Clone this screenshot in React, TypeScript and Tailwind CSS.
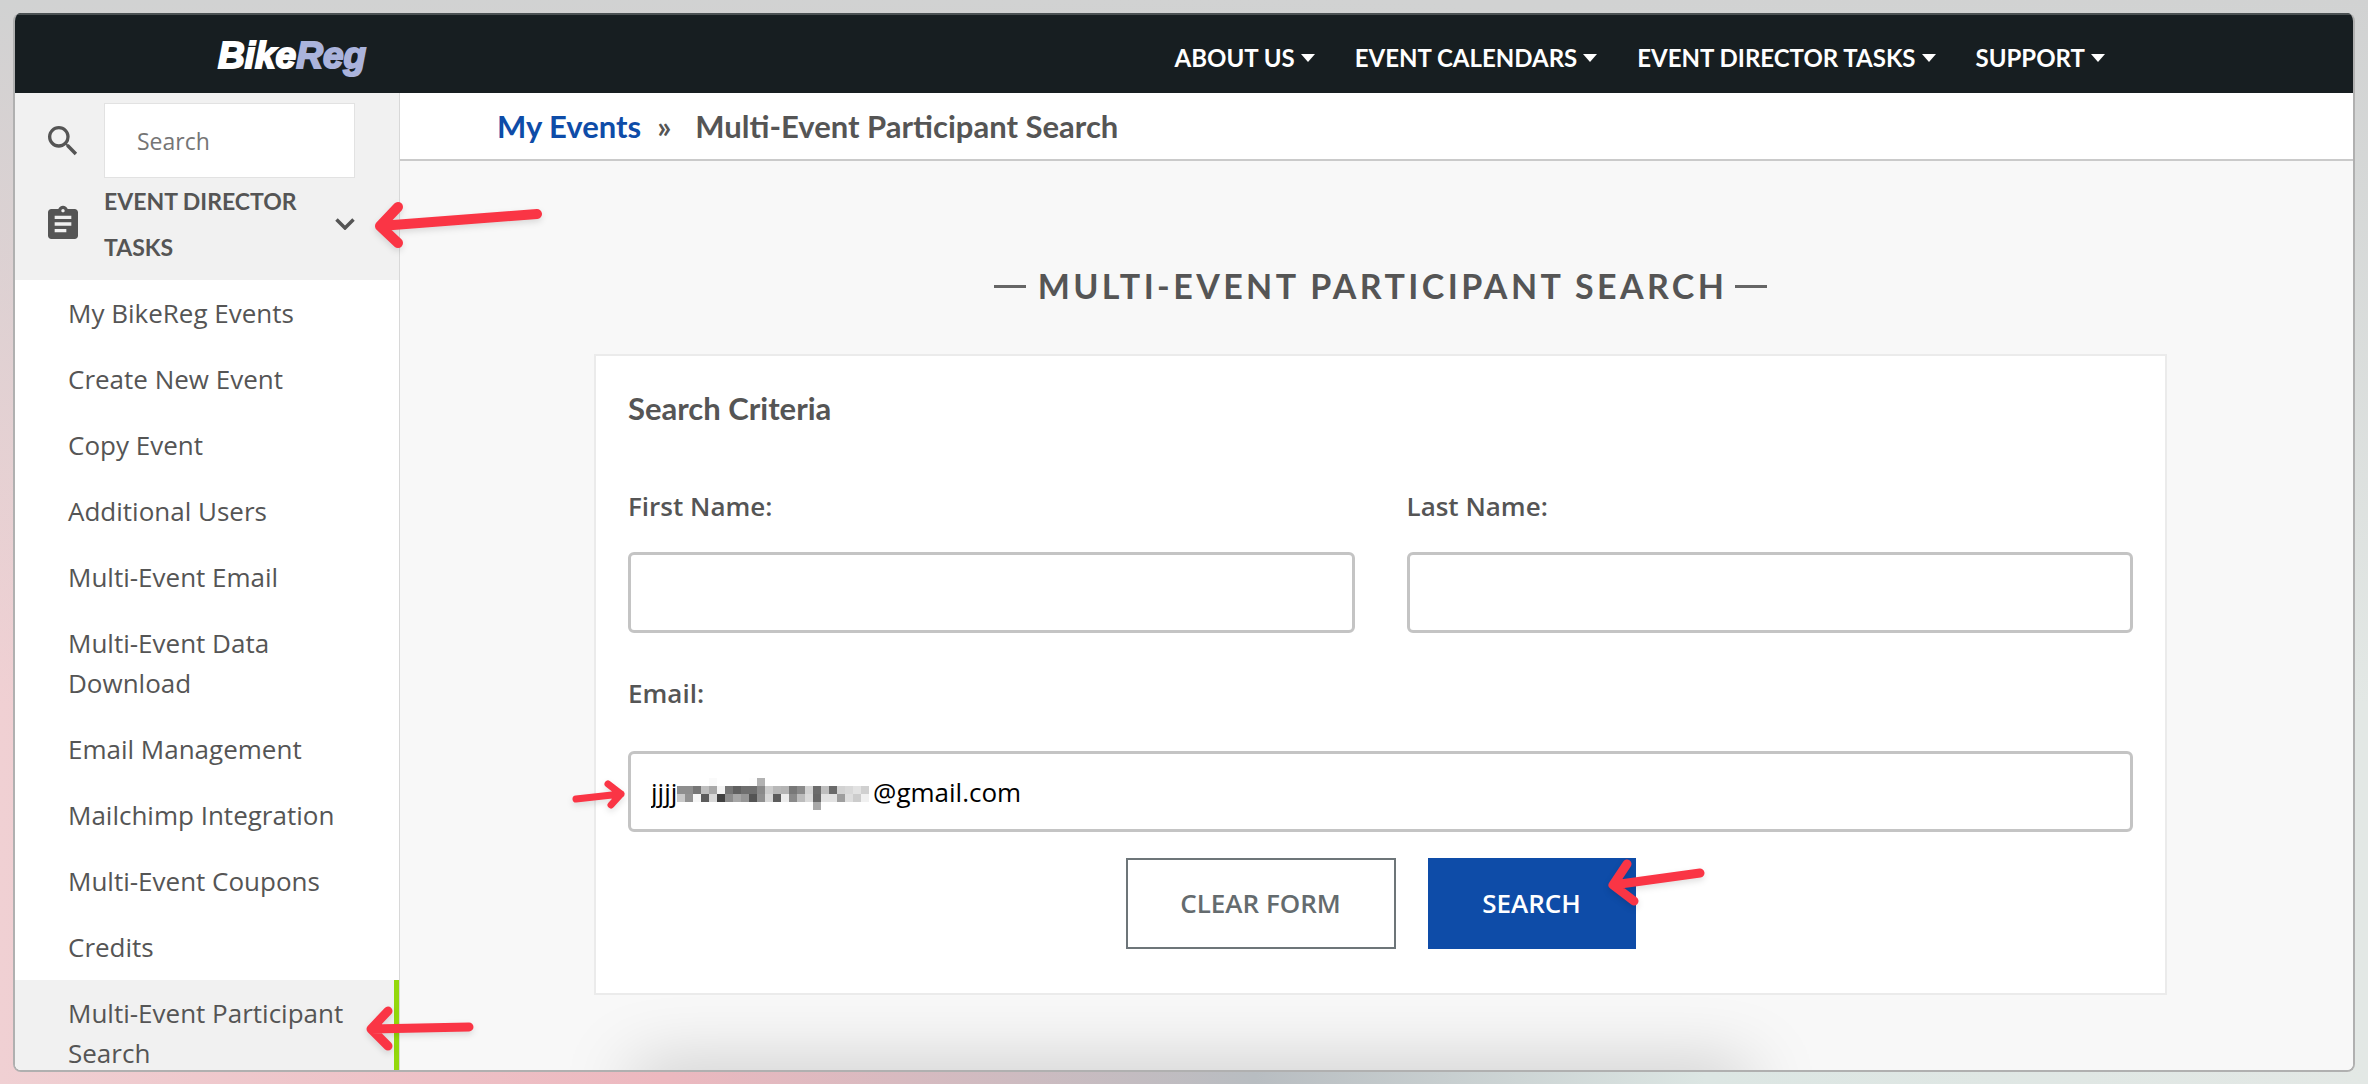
import { useState } from "react";
import { MdAssignment, MdSearch } from "react-icons/md";

const NAV_ITEMS = ["About Us", "Event Calendars", "Event Director Tasks", "Support"];

const MENU_ITEMS = [
  "My BikeReg Events",
  "Create New Event",
  "Copy Event",
  "Additional Users",
  "Multi-Event Email",
  "Multi-Event Data Download",
  "Email Management",
  "Mailchimp Integration",
  "Multi-Event Coupons",
  "Credits",
  "Multi-Event Participant Search",
];

const ACTIVE_ITEM = "Multi-Event Participant Search";

// grey levels of the redacted part of the address, 8px cells
const REDACTED = [
  [255, 255, 255, 255, 250, 255, 255, 255, 255, 253, 178, 255, 255, 255, 255, 255, 255, 255, 255, 255, 255, 255, 255, 255],
  [142, 142, 118, 190, 168, 244, 118, 96, 110, 110, 138, 204, 184, 180, 120, 138, 210, 108, 190, 106, 210, 216, 226, 208],
  [200, 146, 246, 92, 216, 64, 140, 166, 150, 84, 144, 216, 92, 236, 138, 188, 218, 104, 226, 226, 158, 222, 204, 240],
  [255, 255, 255, 255, 255, 255, 255, 255, 255, 255, 255, 255, 255, 255, 255, 255, 255, 168, 255, 255, 255, 255, 255, 255],
];

const FIELD = "h-[81px] w-full rounded-md border-[3px] border-[#c4c4c4] bg-white px-5 text-[26px] text-black outline-none";
const LABEL = "text-[26px] leading-9 font-semibold";

interface ArrowProps {
  className: string;
  viewBox: string;
  d: string;
  strokeWidth: number;
}

function Arrow({ className, viewBox, d, strokeWidth }: ArrowProps) {
  return (
    <svg
      className={`pointer-events-none absolute overflow-visible drop-shadow-md ${className}`}
      viewBox={viewBox}
      fill="none"
      stroke="#fa3545"
      strokeWidth={strokeWidth}
      strokeLinecap="round"
      strokeLinejoin="round"
      aria-hidden="true"
    >
      <path d={d} />
    </svg>
  );
}

function Header() {
  return (
    <header className="flex h-20 shrink-0 items-center justify-between border-t-2 border-[#4b5153] bg-[#171e21] pt-2 pr-[248px] pl-[203px]">
      <a
        href="#"
        className="pb-1 font-['Liberation_Sans',sans-serif] text-[37px] leading-10 font-bold text-white italic [-webkit-text-stroke:2px]"
      >
        Bike<span className="text-[#aab3dc]">Reg</span>
      </a>
      <nav className="flex gap-10 font-['Lato',sans-serif] text-[24px] font-bold text-white">
        {NAV_ITEMS.map((item) => (
          <button key={item} type="button" className="flex items-center gap-1.5 uppercase">
            {item}
            <svg className="h-2 w-3.5" viewBox="0 0 14 8" fill="currentColor" aria-hidden="true">
              <path d="M0 0h14L7 8z" />
            </svg>
          </button>
        ))}
      </nav>
    </header>
  );
}

function Sidebar() {
  return (
    <aside className="relative z-10 w-[385px] shrink-0 border-r border-[#d8d8d8] bg-white">
      <div className="bg-[#f1f1f1] pt-2.5 pb-2.5 pl-7">
        <div className="flex items-center gap-[21px]">
          <MdSearch className="size-10 shrink-0" />
          <input
            type="search"
            aria-label="Search"
            placeholder="Search"
            className="h-[75px] w-[251px] border border-[#e2e2e2] bg-white px-8 text-[23px] outline-none placeholder:text-[#757575]"
          />
        </div>
        <button type="button" className="relative flex w-full items-center gap-[21px] text-left">
          <MdAssignment className="size-10 shrink-0" />
          <span className="w-[220px] font-['Lato',sans-serif] text-[23px] leading-[46px] font-bold uppercase">
            Event Director Tasks
          </span>
          <svg className="-ml-2.5 h-3 w-5" viewBox="0 0 20 12" fill="none" stroke="currentColor" strokeWidth="3.5" aria-hidden="true">
            <path d="M1.5 1.5 10 10l8.500-8.500" />
          </svg>
          <Arrow
            className="top-6 left-[332px] h-[46px] w-[167px]"
            viewBox="0 0 167 46"
            d="M162 12 5 24M23 5 5 24 23 41"
            strokeWidth={10}
          />
        </button>
      </div>
      <ul>
        {MENU_ITEMS.map((item) => (
          <li key={item} className="relative">
            <a
              href="#"
              className={`block border-r-[5px] py-[13px] pr-8 pl-[53px] text-[26px] leading-10 ${
                item === ACTIVE_ITEM ? "border-[#93d80b] bg-[#f1f1f1]" : "border-transparent"
              }`}
            >
              {item}
            </a>
            {item === ACTIVE_ITEM && (
              <Arrow
                className="top-[25px] left-[350px] h-[46px] w-[109px]"
                viewBox="0 0 109 46"
                d="M104 22 6 24M23 6 6 24 23 41"
                strokeWidth={9}
              />
            )}
          </li>
        ))}
      </ul>
    </aside>
  );
}

function SearchForm() {
  const [firstName, setFirstName] = useState("");
  const [lastName, setLastName] = useState("");
  const [email, setEmail] = useState("jjjj                             @gmail.com");

  function clearForm() {
    setFirstName("");
    setLastName("");
    setEmail("");
  }

  return (
    <form className="mt-[45px] border-2 border-[#ebebeb] bg-white px-8 pt-8 pb-11" onSubmit={(e) => e.preventDefault()}>
      <h2 className="font-['Lato',sans-serif] text-[31px] leading-10 font-bold">Search Criteria</h2>
      <div className="mt-[60px] grid grid-cols-2 gap-[52px]">
        <div>
          <label htmlFor="first-name" className={LABEL}>First Name:</label>
          <input id="first-name" className={`mt-7 ${FIELD}`} value={firstName} onChange={(e) => setFirstName(e.target.value)} />
        </div>
        <div>
          <label htmlFor="last-name" className={LABEL}>Last Name:</label>
          <input id="last-name" className={`mt-7 ${FIELD}`} value={lastName} onChange={(e) => setLastName(e.target.value)} />
        </div>
      </div>
      <div className="mt-[42px]">
        <label htmlFor="email" className={LABEL}>Email:</label>
        <div className="relative mt-10">
          <input id="email" className={FIELD} value={email} onChange={(e) => setEmail(e.target.value)} />
          {email && (
            <svg className="absolute top-[27px] left-[49px] h-8 w-[194px]" viewBox="0 0 194 32" shapeRendering="crispEdges" aria-hidden="true">
              {REDACTED.map((row, y) =>
                row.map((v, x) => <rect key={`${x}-${y}`} x={x * 8} y={y * 8} width="8" height="8" fill={`rgb(${v},${v},${v})`} />)
              )}
            </svg>
          )}
          <Arrow
            className="top-[29px] -left-14 h-[29px] w-[52px]"
            viewBox="0 0 52 29"
            d="M4 19 49 14M36 4 49 14 39 25"
            strokeWidth={7}
          />
        </div>
      </div>
      <div className="mt-[26px] flex justify-center gap-8 text-[26px] font-semibold">
        <button type="button" onClick={clearForm} className="h-[91px] w-[270px] border-2 border-[#6d7579] text-[#646b6e] uppercase">
          Clear Form
        </button>
        <div className="relative">
          <button type="submit" className="h-[91px] w-[208px] bg-[#0e4ca8] text-white uppercase">
            Search
          </button>
          <Arrow
            className="top-0 left-[180px] h-12 w-24"
            viewBox="0 0 96 48"
            d="M92 15 5 27M19 6 5 27 26 43"
            strokeWidth={9}
          />
        </div>
      </div>
    </form>
  );
}

export default function App() {
  return (
    <div className="h-screen overflow-hidden bg-[linear-gradient(180deg,#d1d2d2,#d1d2d200_65%),linear-gradient(90deg,#f0d0d3,#edb8bf_28%,#b8bdc1_53%,#dce6e3_72%,#e3e8e5)] p-[13px] pb-3 font-['Open_Sans',sans-serif] text-[#555]">
      <div className="flex h-full flex-col overflow-hidden rounded-lg border-x-2 border-b-2 border-[#b0b0b0] bg-white">
        <Header />
        <div className="flex min-h-0 grow">
          <Sidebar />
          <main className="relative grow overflow-hidden bg-[#f8f8f8]">
            <div className="flex h-[68px] items-center gap-4 border-b-2 border-[#cacaca] bg-white pl-[97px] font-['Lato',sans-serif] text-[31px] font-bold">
              <a href="#" className="text-[#0e4ca8]">My Events</a>
              <span className="mr-2">»</span>
              <span>Multi-Event Participant Search</span>
            </div>
            <section className="pt-[102px] pr-[186px] pl-[194px]">
              <h1 className="flex items-center justify-center gap-2 font-['Lato',sans-serif] text-[34px] leading-[46px] font-bold tracking-widest uppercase">
                <span className="mr-1 h-[3px] w-8 bg-[#666]" />
                Multi-Event Participant Search
                <span className="h-[3px] w-8 bg-[#666]" />
              </h1>
              <SearchForm />
            </section>
            <div className="absolute right-[31%] -bottom-10 left-[12%] h-10 shadow-[0_0_70px_rgba(0,0,0,0.25)]" />
          </main>
        </div>
      </div>
    </div>
  );
}
